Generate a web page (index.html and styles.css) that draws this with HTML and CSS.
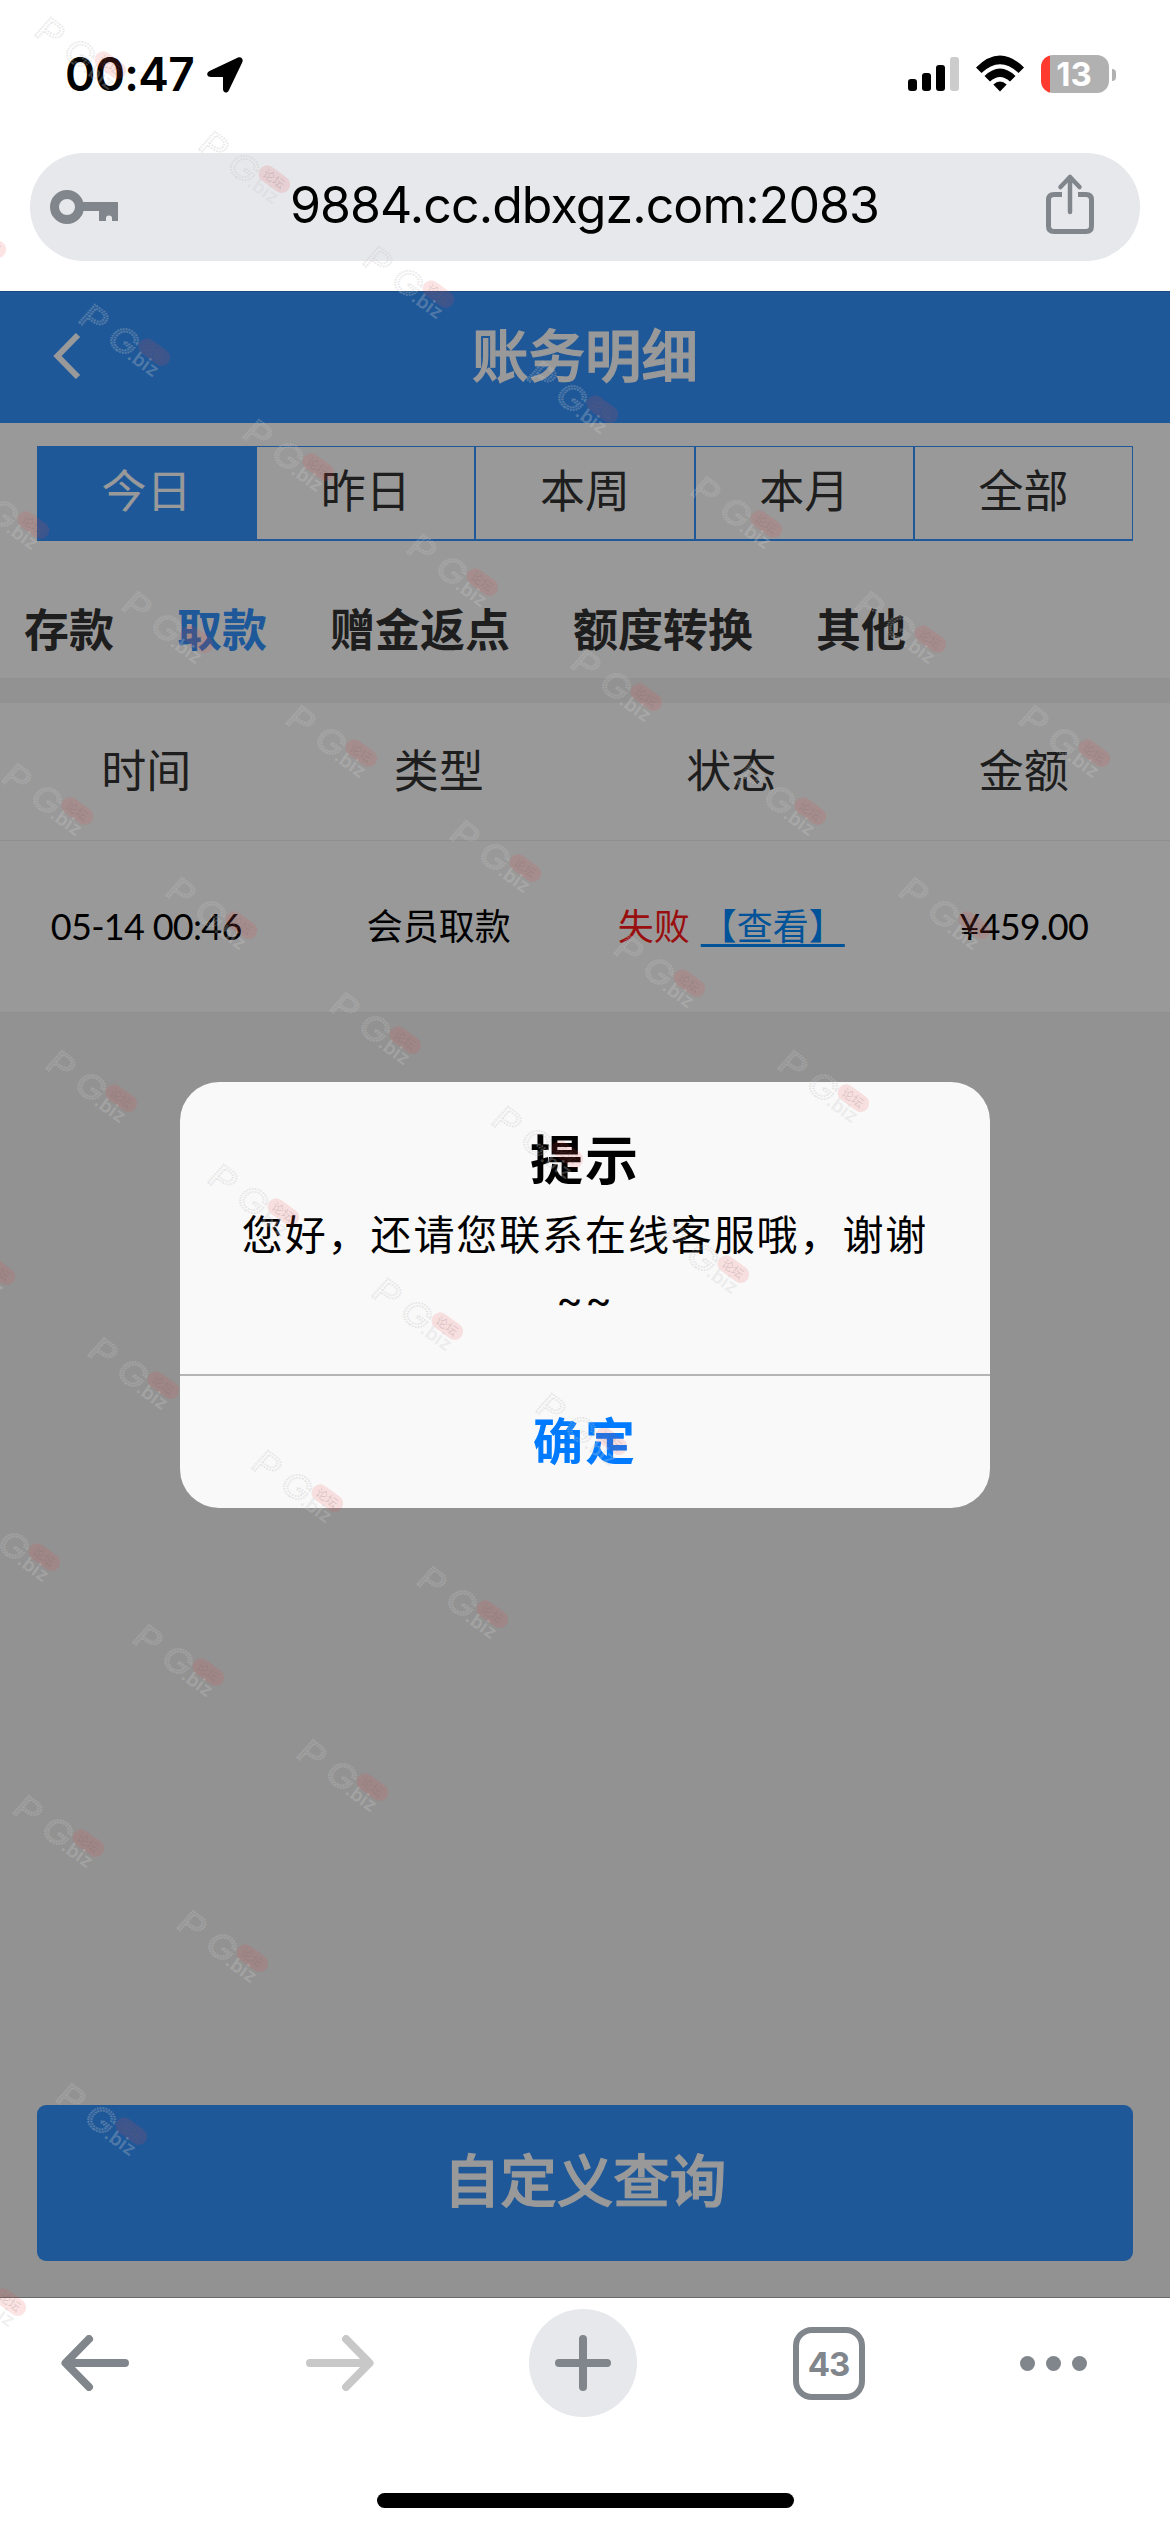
FILE: index.html
```html
<!DOCTYPE html>
<html lang="zh-CN">
<head>
<meta charset="utf-8">
<title>账务明细</title>
<link rel="stylesheet" href="styles.css">
</head>
<body>
<div class="phone">
  <div class="status">
    <span class="clock">00:47</span>
    <svg class="location" width="36" height="36" viewBox="0 0 36 36"><path d="M2.500 14 30.500 .8C34-.8 36.800 2 35.300 5.200L22 33C20.200 37 16 36 16 32V20H4C-.500 20-1 15.800 2.500 14Z"/></svg>
    <div class="status-icons">
      <svg width="52" height="36" viewBox="0 0 52 36"><rect y="22" width="9" height="12" rx="3"/><rect x="14" y="16" width="9" height="18" rx="3"/><rect x="28" y="8" width="9" height="26" rx="3"/><rect x="42" width="9" height="34" rx="3" fill="#ccc"/></svg>
      <svg class="wifi" width="50" height="38" viewBox="0 0 50 38"><path d="M1 12.500Q25-11.500 49 12.500L43.500 18Q25 .5 6.500 18Z"/><path d="M9.500 21Q25 6 40.500 21L35 26.500Q25 17.500 15 26.500Z"/><path d="M18.300 29.500Q25 23.500 31.700 29.500L25 36.500Z"/></svg>
      <div class="battery"><span>13</span></div><i class="battery-tip"></i>
    </div>
  </div>
  <div class="address">
    <svg width="70" height="36" viewBox="0 0 70 36"><circle cx="17" cy="18" r="12.500" fill="none" stroke="#80868b" stroke-width="9"/><path fill="#80868b" d="M32 13H68V32H62V29Q62 26.500 59 26.500T56 29V32H49V22H32Z"/></svg>
    <span class="url">9884.cc.dbxgz.com:2083</span>
    <svg class="share" width="50" height="62" viewBox="0 0 50 62" fill="none" stroke="#80868b" stroke-width="5" stroke-linecap="round" stroke-linejoin="round"><path stroke-linecap="butt" d="M17 21.500H9Q3.500 21.500 3.500 27V53Q3.500 58.500 9 58.500H41Q46.500 58.500 46.500 53V27Q46.500 21.500 41 21.500H33"/><path stroke-width="4.500" d="M25 39V4M15.500 14 25 4 34.500 14"/></svg>
  </div>

  <main class="page">
    <header class="title-bar">
      <svg width="28" height="46" viewBox="0 0 28 46" fill="none" stroke="#fff" stroke-width="6"><path d="M25 2 4.500 23 25 44"/></svg>
      <h1>账务明细</h1>
    </header>
    <section class="filters">
      <div class="ranges"><span class="on">今日</span><span>昨日</span><span>本周</span><span>本月</span><span>全部</span></div>
      <nav class="kinds"><span>存款</span><span class="current">取款</span><span>赠金返点</span><span>额度转换</span><span>其他</span></nav>
    </section>
    <section class="records">
      <div class="row head"><span>时间</span><span>类型</span><span>状态</span><span>金额</span></div>
      <div class="row"><span>05-14 00:46</span><span>会员取款</span><span class="state"><em>失败</em><a>【查看】</a></span><span>¥459.00</span></div>
    </section>
    <button class="query">自定义查询</button>

    <div class="mask">
      <div class="dialog">
        <div class="dialog-body">
          <h2>提示</h2>
          <p>您好，还请您联系在线客服哦，谢谢<br>~~</p>
        </div>
        <div class="confirm">确定</div>
      </div>
    </div>
  </main>

  <footer class="toolbar">
    <svg class="back" width="68" height="56" viewBox="0 0 68 56"><path d="M64 28H5M28 4 4.500 28 28 52"/></svg>
    <svg class="forward" width="68" height="56" viewBox="0 0 68 56"><path d="M4 28H63M40 4 63.500 28 40 52"/></svg>
    <div class="new-tab"><svg width="58" height="58" viewBox="0 0 58 58"><path d="M29 5V53M5 29H53"/></svg></div>
    <div class="tab-count">43</div>
    <div class="more"><i></i><i></i><i></i></div>
  </footer>
  <div class="home"></div>

  <svg class="marks" width="1170" height="2532" viewBox="0 0 1170 2532">
    <defs>
      <g id="mark">
        <g transform="translate(1 21) rotate(36)">
          <g transform="skewX(-6) scale(1.2 1)"><text class="mark-pg" x="-2" y="0">P</text><text class="mark-pg" x="27" y="0">G</text></g>
          <rect class="mark-pill" x="62" y="-29" width="35" height="17" rx="8.500"/>
          <text class="mark-cn" x="67" y="-16">论坛</text>
          <text class="mark-biz" x="60" y="1">.biz</text>
        </g>
      </g>
    </defs>
    <use href="#mark" x="33" y="14"/><use href="#mark" x="197" y="128"/><use href="#mark" x="361" y="243"/><use href="#mark" x="525" y="358"/><use href="#mark" x="689" y="473"/><use href="#mark" x="853" y="588"/><use href="#mark" x="1017" y="702"/>
    <use href="#mark" x="-87" y="193"/><use href="#mark" x="77" y="301"/><use href="#mark" x="241" y="416"/><use href="#mark" x="405" y="531"/><use href="#mark" x="569" y="646"/><use href="#mark" x="733" y="760"/><use href="#mark" x="897" y="874"/>
    <use href="#mark" x="-44" y="474"/><use href="#mark" x="120" y="588"/><use href="#mark" x="284" y="702"/><use href="#mark" x="448" y="817"/><use href="#mark" x="612" y="932"/><use href="#mark" x="776" y="1047"/>
    <use href="#mark" x="0" y="760"/><use href="#mark" x="164" y="874"/><use href="#mark" x="328" y="989"/><use href="#mark" x="490" y="1103"/><use href="#mark" x="656" y="1218"/>
    <use href="#mark" x="44" y="1047"/><use href="#mark" x="206" y="1161"/><use href="#mark" x="370" y="1275"/><use href="#mark" x="534" y="1390"/>
    <use href="#mark" x="-78" y="1220"/><use href="#mark" x="86" y="1334"/><use href="#mark" x="250" y="1447"/><use href="#mark" x="415" y="1563"/>
    <use href="#mark" x="-33" y="1506"/><use href="#mark" x="131" y="1621"/><use href="#mark" x="295" y="1736"/>
    <use href="#mark" x="11" y="1792"/><use href="#mark" x="175" y="1907"/><use href="#mark" x="54" y="2080"/><use href="#mark" x="-67" y="2251"/>
  </svg>
</div>
</body>
</html>
```
FILE: styles.css
```css
* { box-sizing: border-box; }
body { margin: 0; background: #fff; }
.phone {
  position: relative; width: 1170px; height: 2532px; overflow: hidden;
  display: flex; flex-direction: column;
  font-family: Inter, "Noto Sans CJK SC", sans-serif; color: #000;
}
svg { display: block; flex: none; }

/* Status bar */
.status { height: 153px; padding: 55px 54px 0 65px; display: flex; align-items: flex-start; }
.clock { width: 142px; line-height: 38px; font-size: 46px; font-weight: 600; letter-spacing: -.7px; white-space: nowrap; }
.location { margin-top: 2px; }
.status-icons { margin-left: auto; display: flex; align-items: flex-start; }
.status-icons > svg:first-child { margin-top: 2px; }
.wifi { margin: 0 16px 0 15px; }
.battery {
  width: 68px; height: 38px; border-radius: 12px; padding-right: 2px; color: #fff;
  background: linear-gradient(90deg, #ff3b30 9px, #b1b1b1 9px);
  font-size: 33px; line-height: 38px; font-weight: 700; text-align: center;
}
.battery-tip { width: 4px; height: 12px; margin: 14px 0 0 3px; border-radius: 0 4px 4px 0; background: #b1b1b1; }

/* Address bar */
.address {
  height: 108px; margin: 0 30px 30px; padding: 0 45px 0 20px; border-radius: 54px;
  background: #e7e8ec; display: flex; align-items: center; justify-content: space-between;
}
.url { font-size: 50px; line-height: 104px; height: 108px; letter-spacing: -.9px; margin-right: -4px; }
.share { margin-bottom: 6px; }

/* Web page */
.page {
  position: relative; height: 2007px; background: #f3f3f3;
  border-bottom: 1px solid #b0b0b0; display: flex; flex-direction: column;
  font-family: Lato, "Noto Sans CJK SC", sans-serif;
}
.title-bar {
  height: 132px; padding-left: 53px; background: #3293ff; border-top: 1px solid #2b7dd6;
  display: flex; align-items: center;
}
h1 {
  flex: 1; height: 130px; margin: 0 81px 0 0; color: #fff; text-align: center;
  font-size: 56.500px; line-height: 124px; font-weight: 500; -webkit-text-stroke: 1.200px #fff;
}
.title-bar svg { margin-top: -3px; }
.filters { height: 255px; padding: 23px 37px 0; background: #fff; color: #333; font-size: 45px; }
.ranges { height: 95px; display: flex; border: 1px solid #3293ff; border-bottom-width: 2px; }
.ranges span { flex: 1; text-align: center; line-height: 89px; }
.ranges span + span { border-left: 2px solid #3293ff; }
.ranges .on { background: #3293ff; color: #fff; }
.kinds { display: flex; gap: 63px; margin: 57px 0 0 -13px; line-height: 64px; font-weight: 600; }
.current { color: #3293ff; }
.records { margin-top: 25px; background: #fff; }
.row {
  height: 172px; border-bottom: 1px solid #eee; font-size: 36px; line-height: 171px;
  display: grid; grid-template-columns: repeat(4, 1fr); text-align: center; letter-spacing: -.7px;
}
.row.head { height: 138px; line-height: 136px; font-size: 45px; color: #333; letter-spacing: 0; }
.row > :nth-child(2), .row .state { letter-spacing: 0; }
.state { display: flex; justify-content: center; gap: 11px; }
.row.head .state { display: block; }
.state em { font-style: normal; color: #ff1a1a; }
.state a { color: #0089ff; text-decoration: underline; text-decoration-thickness: 3px; text-underline-offset: 4px; text-decoration-skip-ink: none; }
.query {
  height: 156px; margin: auto 37px 36px; padding: 0 0 12px; border: 0; border-radius: 9px;
  background: #3293ff; color: #fff; font: 500 56.500px/144px "Noto Sans CJK SC", sans-serif; -webkit-text-stroke: 1.200px #fff;
}

/* Dialog */
.mask {
  position: absolute; inset: 0 0 -1px; background: rgba(0, 0, 0, .4);
  display: flex; align-items: center; justify-content: center;
}
.dialog {
  width: 810px; height: 426px; border-radius: 39px; background: #f9f9f9; text-align: center;
  font-family: Inter, "Noto Sans CJK SC", sans-serif; display: flex; flex-direction: column;
}
.dialog-body { flex: 1; padding-top: 42px; border-bottom: 2px solid #b5b5b5; }
h2 { margin: 0; font-size: 53px; line-height: 74px; font-weight: 600; letter-spacing: 2px; }
p { margin: 5px 0 0; font-size: 41px; line-height: 64px; letter-spacing: 1.900px; white-space: nowrap; }
.confirm { height: 132px; line-height: 133px; color: #007aff; font-size: 50px; font-weight: 600; letter-spacing: 2px; }

/* Browser toolbar */
.toolbar { height: 132px; padding: 0 83px 2px 61px; display: flex; align-items: center; justify-content: space-between; }
.toolbar svg { fill: none; stroke: #80868b; stroke-width: 8; stroke-linecap: round; stroke-linejoin: round; }
.toolbar .forward { stroke: #c8c8c8; margin-left: 21px; }
.new-tab { width: 108px; height: 108px; border-radius: 50%; background: #e7e8ec; display: flex; align-items: center; justify-content: center; }
.tab-count {
  width: 72px; height: 73px; border: 6px solid #80868b; border-radius: 19px; color: #80868b;
  font-size: 33px; line-height: 63px; font-weight: 700; text-align: center; letter-spacing: -1px;
}
.more { display: flex; gap: 11px; }
.more i { width: 15px; height: 15px; border-radius: 50%; background: #80868b; }
.home { width: 417px; height: 15px; margin: 63px auto 0; border-radius: 8px; background: #000; }

/* Repeated diagonal mark */
.marks { position: absolute; inset: 0; pointer-events: none; }
.mark-pg { font: 400 33px Inter, sans-serif; fill: rgba(255, 255, 255, .08); stroke: rgba(190, 190, 190, .32); stroke-width: 1.800; stroke-dasharray: 1.500 1; }
.mark-biz { font: 600 19px Inter, sans-serif; fill: rgba(205, 205, 205, .3); }
.mark-pill { fill: rgba(235, 75, 75, .15); }
.mark-cn { font: 12px "Noto Sans CJK SC", sans-serif; fill: rgba(120, 100, 100, .22); }
```
